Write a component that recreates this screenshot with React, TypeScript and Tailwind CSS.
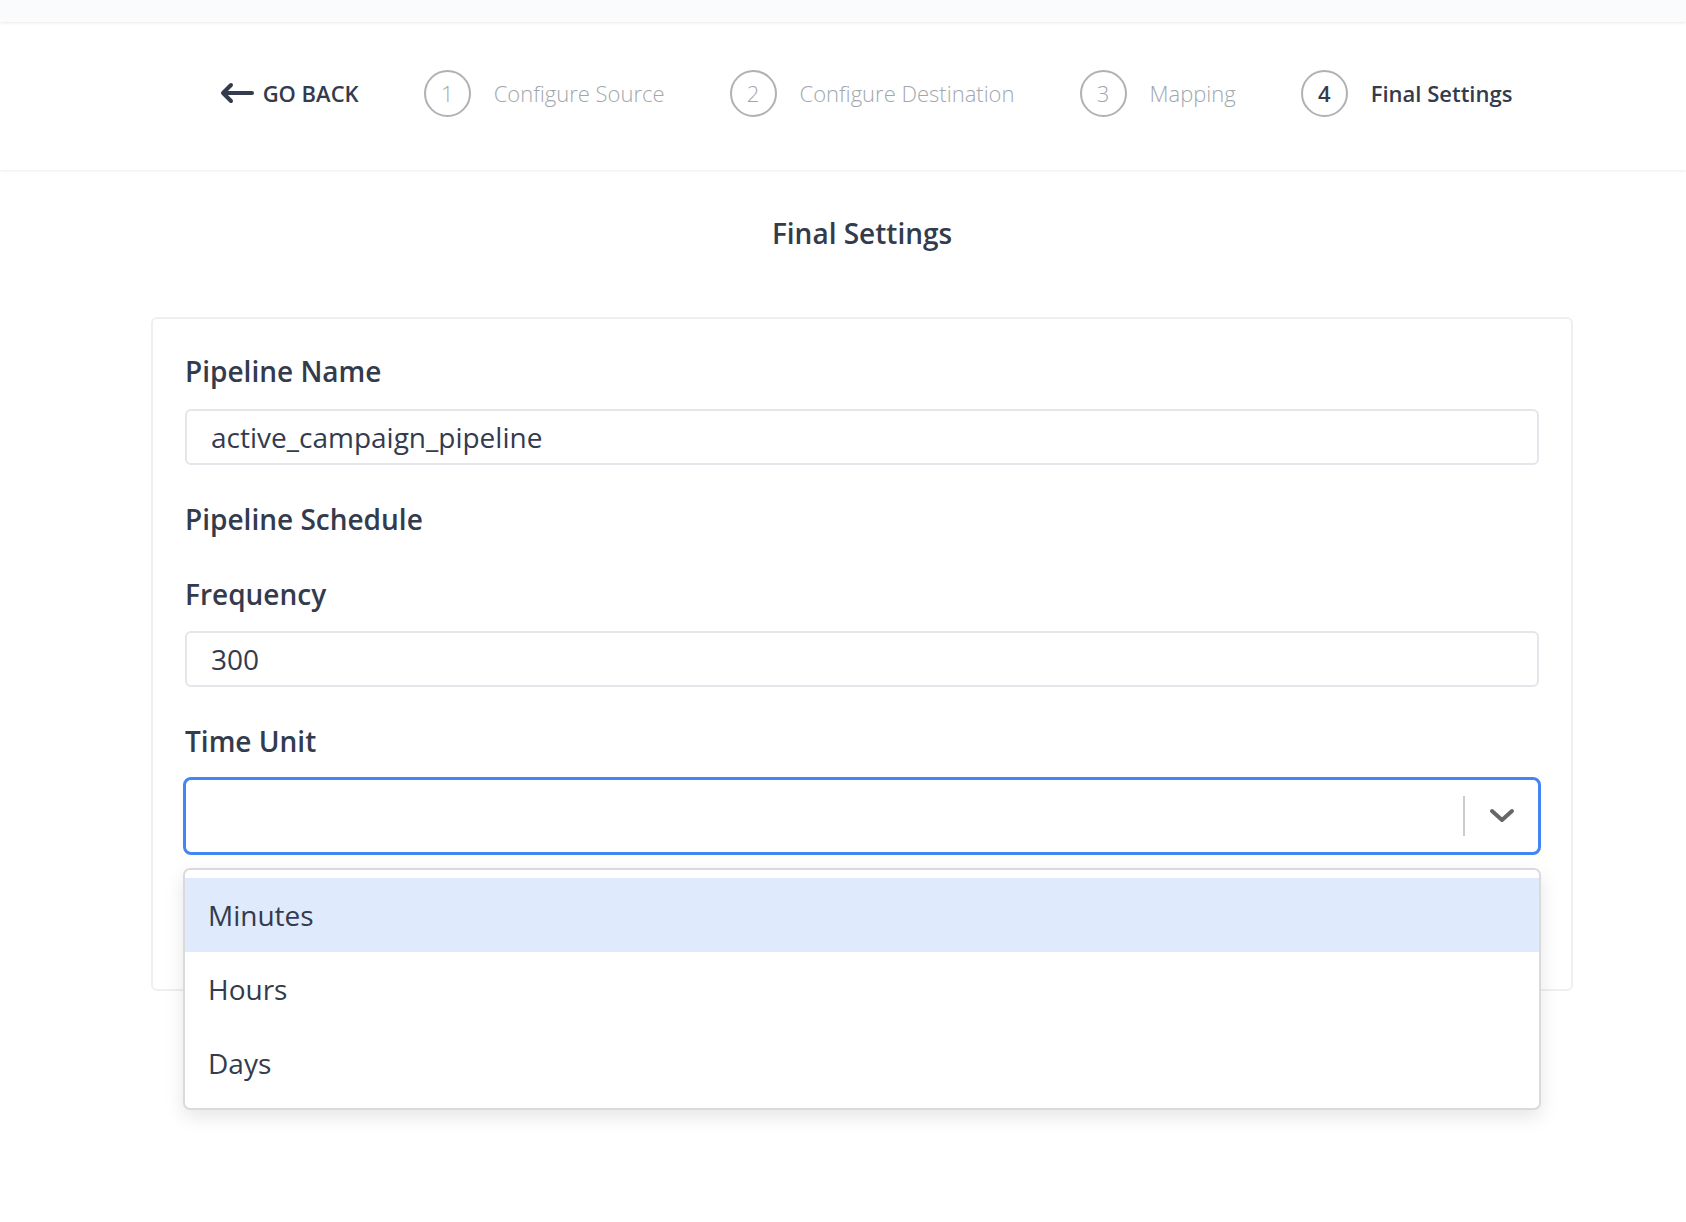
import React from 'react';

const steps = [
    { n: 1, label: 'Configure Source', active: false },
    { n: 2, label: 'Configure Destination', active: false },
    { n: 3, label: 'Mapping', active: false },
    { n: 4, label: 'Final Settings', active: true },
];

const options = ['Minutes', 'Hours', 'Days'];

const Label: React.FC<{ children: React.ReactNode; className?: string }> = ({ children, className }) => (
    <div className={`text-[28px] leading-[38px] font-semibold text-[#333b4d] ${className || ''}`}>{children}</div>
);

const TextBox: React.FC<{ value: string; className?: string }> = ({ value, className }) => (
    <div
        className={`h-[56px] border-2 border-[#e3e6ea] rounded-[6px] bg-white flex items-center pl-[24px] text-[28px] text-[#333b4d] ${className || ''}`}
    >
        {value}
    </div>
);

export default function App() {
    return (
        <div className="min-h-screen bg-white" style={{ fontFamily: '"Open Sans", sans-serif' }}>
            {/* top strip */}
            <div className="h-[22px] bg-[#fafbfd] relative z-10 shadow-[0_1px_3px_rgba(0,0,0,0.09)]" />

            {/* stepper */}
            <header className="h-[148px] bg-white relative shadow-[0_1px_3px_rgba(0,0,0,0.08)]">
                <div className="h-full pl-[155px] pr-[109px] flex items-center justify-center pb-[6px]">
                    <button className="flex items-center gap-[9px] text-[22px] font-semibold text-[#333b4d]">
                        <svg width="34" height="24" viewBox="0 0 34 24" fill="none" stroke="#333b4d" strokeWidth="4" strokeLinecap="round" strokeLinejoin="round">
                            <path d="M32 12H4" />
                            <path d="M11 4L3 12L11 20" />
                        </svg>
                        GO BACK
                    </button>
                    {steps.map((s) => (
                        <div key={s.n} className="flex items-center ml-[65px]">
                            <div
                                className={`w-[47px] h-[47px] rounded-full border-2 border-[#aeb2b6] flex items-center justify-center text-[22px] ${
                                    s.active ? 'font-semibold text-[#333b4d]' : 'font-light text-[#a2a7ad]'
                                }`}
                            >
                                {s.n}
                            </div>
                            <span
                                className={`ml-[23px] text-[22px] ${
                                    s.active ? 'font-semibold text-[#333b4d]' : 'font-light text-[#a2a7ad]'
                                }`}
                            >
                                {s.label}
                            </span>
                        </div>
                    ))}
                </div>
            </header>

            <main className="pl-[151px] pr-[113px]">
                <h1 className="mt-[44px] text-center text-[28px] leading-[38px] font-semibold text-[#333b4d]">Final Settings</h1>

                <div className="mt-[65px] border-2 border-[#eeeff3] rounded-[6px] px-[32px] pt-[33px] pb-[134px]">
                    <Label>Pipeline Name</Label>
                    <TextBox value="active_campaign_pipeline" className="mt-[19px]" />

                    <Label className="mt-[35px]">Pipeline Schedule</Label>

                    <Label className="mt-[37px]">Frequency</Label>
                    <TextBox value="300" className="mt-[18px]" />

                    <Label className="mt-[35px]">Time Unit</Label>
                    <div className="relative mt-[17px] -mx-[2px]">
                        <div className="h-[78px] border-[3px] border-[#4285f4] rounded-[8px] bg-white flex items-center justify-end">
                            <div className="w-[2px] h-[40px] bg-[#cccccc]" />
                            <div className="w-[73px] flex items-center justify-center">
                                <svg width="26" height="16" viewBox="0 0 26 16" fill="none" stroke="#666666" strokeWidth="4" strokeLinecap="round" strokeLinejoin="round">
                                    <path d="M3 3L13 12L23 3" />
                                </svg>
                            </div>
                        </div>

                        <div className="absolute left-0 right-0 top-[calc(100%+13px)] z-20 bg-white rounded-[7px] border-2 border-[#dadada] py-[8px] shadow-[0_7px_19px_rgba(0,0,0,0.1)]">
                            {options.map((o, i) => (
                                <div
                                    key={o}
                                    className={`h-[74px] flex items-center pl-[23px] text-[28px] text-[#333b4d] ${i === 0 ? 'bg-[#dfeafc]' : ''}`}
                                >
                                    {o}
                                </div>
                            ))}
                        </div>
                    </div>
                </div>
            </main>
        </div>
    );
}
